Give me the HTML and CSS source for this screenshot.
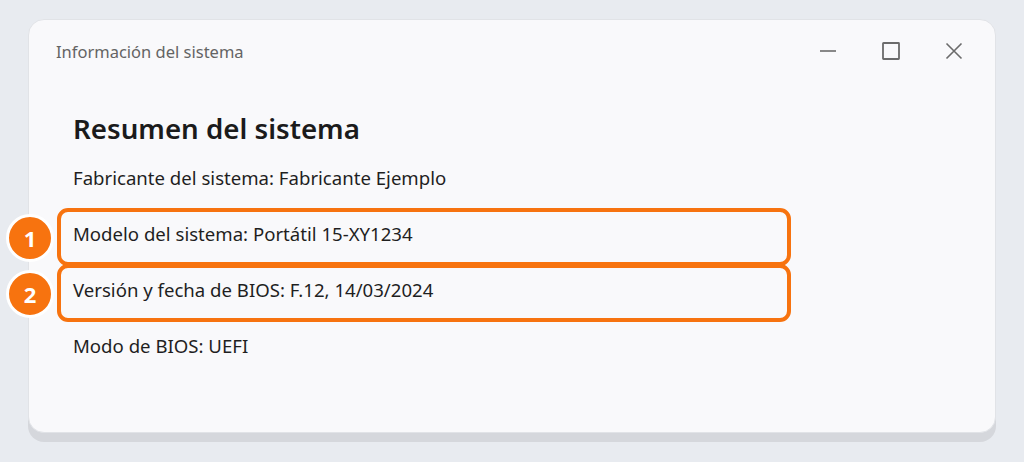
FILE: index.html
```html
<!DOCTYPE html>
<html lang="es">
<head>
    <meta charset="UTF-8">
    <meta name="viewport" content="width=device-width, initial-scale=1.0">
    <title>Información del sistema</title>
    <link rel="stylesheet" href="styles.css">
</head>
<body>

    <div class="window">
        <div class="titlebar">
            <span class="title">Información del sistema</span>
            <div class="controls">
                <button class="control" aria-label="Minimizar">
                    <svg width="18" height="18" viewBox="0 0 18 18"><path d="M1 9h16" stroke="#6b6b6b" stroke-width="1.6" fill="none"/></svg>
                </button>
                <button class="control" aria-label="Maximizar">
                    <svg width="18" height="18" viewBox="0 0 18 18"><rect x="1" y="1" width="16" height="16" rx="0.5" stroke="#6b6b6b" stroke-width="1.8" fill="none"/></svg>
                </button>
                <button class="control" aria-label="Cerrar">
                    <svg width="18" height="18" viewBox="0 0 18 18"><path d="M1.5 1.5l15 15M16.5 1.5l-15 15" stroke="#6b6b6b" stroke-width="1.6" fill="none"/></svg>
                </button>
            </div>
        </div>

        <div class="content">
            <h1>Resumen del sistema</h1>

            <div class="rows">
                <div class="row">Fabricante del sistema: Fabricante Ejemplo</div>
                <div class="row marked">
                    <span class="badge">1</span>
                    Modelo del sistema: Portátil 15-XY1234
                </div>
                <div class="row marked">
                    <span class="badge">2</span>
                    Versión y fecha de BIOS: F.12, 14/03/2024
                </div>
                <div class="row">Modo de BIOS: UEFI</div>
            </div>
        </div>
    </div>

</body>
</html>
```

FILE: styles.css
```css
* {
    margin: 0;
    padding: 0;
    box-sizing: border-box;
    font-family: "Noto Sans", "Open Sans", sans-serif;
}

body {
    background-color: #e8ebf0;
    padding: 19px 28px;
    height: 462px;
    overflow: hidden;
}

.window {
    background-color: #f9f9fb;
    height: 414px;
    border: 1px solid #e1e3e7;
    border-radius: 16px;
    box-shadow: 0 9px 0 #d5d7dc;
}

.titlebar {
    height: 62px;
    display: flex;
    align-items: center;
    justify-content: space-between;
    padding: 0 23px 0 27px;
}

.title {
    font-size: 16.5px;
    color: #646464;
}

.controls {
    display: flex;
    gap: 27px;
}

.control {
    width: 36px;
    height: 18px;
    border: none;
    background: none;
    display: flex;
    align-items: center;
    justify-content: center;
}

.content {
    padding: 29px 0 0 44px;
}

h1 {
    font-size: 27.7px;
    font-weight: 600;
    line-height: 34px;
    color: #1b1b1b;
}

.rows {
    margin: 7px 0 0 -16px;
    width: 734px;
}

.row {
    position: relative;
    height: 58px;
    margin-bottom: -2px;
    display: flex;
    align-items: center;
    padding: 0 0 8px 12px;
    border: 4px solid transparent;
    border-radius: 11px;
    font-size: 18.6px;
    color: #1f1f1f;
}

.row.marked {
    border-color: #f7730f;
}

.badge {
    position: absolute;
    left: -55px;
    top: 50%;
    margin-top: -23px;
    width: 48px;
    height: 48px;
    border-radius: 50%;
    background-color: #f7730f;
    border: 3px solid #fff;
    color: #fff;
    font-size: 22px;
    font-weight: 700;
    display: flex;
    align-items: center;
    justify-content: center;
}
```
